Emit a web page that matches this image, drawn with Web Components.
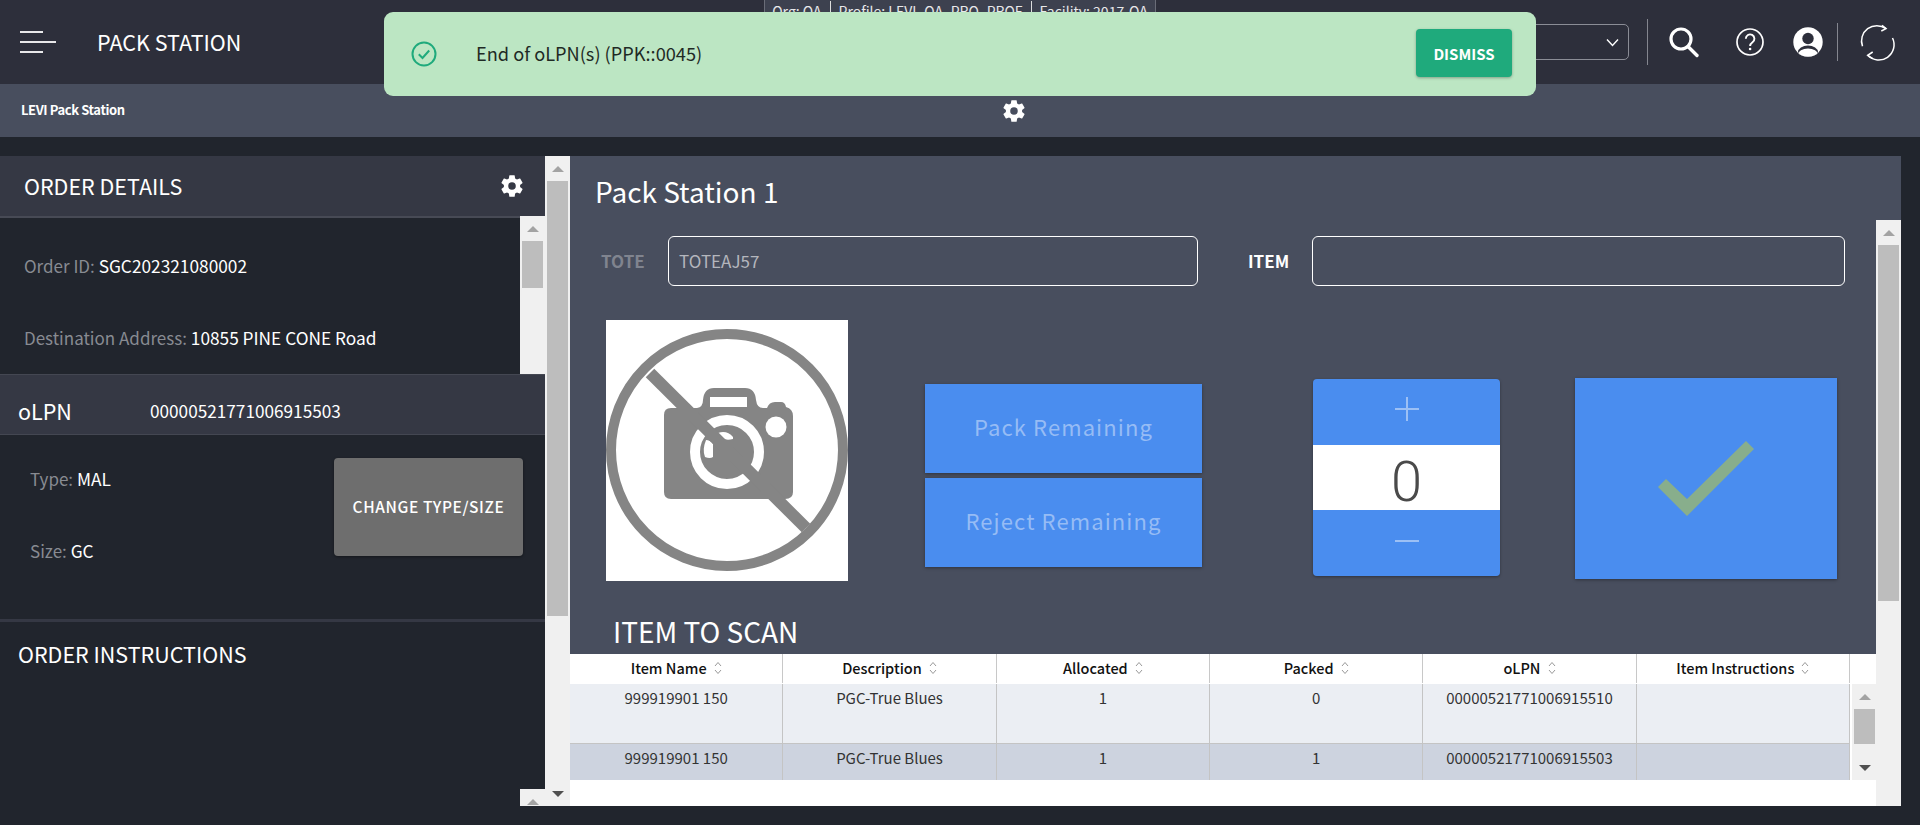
<!DOCTYPE html>
<html lang="en"><head><meta charset="utf-8"><title>Pack Station</title>
<style>
html,body{margin:0;padding:0;height:825px;overflow:hidden;background:#21252d;font-family:"Noto Sans CJK SC","Noto Sans",sans-serif}
</style></head><body>
<pack-app></pack-app>
<script>
const FONT='"Noto Sans CJK SC","Noto Sans",sans-serif';
function def(name,css,html,init){
  customElements.define(name,class extends HTMLElement{
    connectedCallback(){
      if(this.shadowRoot)return;
      const r=this.attachShadow({mode:'open'});
      r.innerHTML=`<style>:host{display:block;box-sizing:border-box;font-family:${FONT}}*{box-sizing:border-box}${css}</style>${typeof html==='function'?html(this):html}`;
      if(init)init(this,r);
    }
  });
}
const GEAR=`<svg viewBox="0 0 24 24" width="100%" height="100%"><path fill="#fff" d="M19.43 12.98c.04-.32.07-.64.07-.98s-.03-.66-.07-.98l2.11-1.65c.19-.15.24-.42.12-.64l-2-3.46c-.12-.22-.39-.3-.61-.22l-2.49 1c-.52-.4-1.08-.73-1.69-.98l-.38-2.65A.49.49 0 0 0 14 2h-4c-.25 0-.46.18-.49.42l-.38 2.65c-.61.25-1.17.59-1.69.98l-2.49-1c-.23-.09-.49 0-.61.22l-2 3.46c-.13.22-.07.49.12.64l2.11 1.65c-.04.32-.07.65-.07.98s.03.66.07.98l-2.11 1.65c-.19.15-.24.42-.12.64l2 3.46c.12.22.39.3.61.22l2.49-1c.52.4 1.08.73 1.69.98l.38 2.65c.03.24.24.42.49.42h4c.25 0 .46-.18.49-.42l.38-2.65c.61-.25 1.17-.59 1.69-.98l2.49 1c.23.09.49 0 .61-.22l2-3.46c.12-.22.07-.49-.12-.64l-2.11-1.65zM12 15.5A3.5 3.5 0 1 1 12 8.5a3.5 3.5 0 0 1 0 7z"/></svg>`;

def('gear-icon',`:host{display:block;width:26px;height:26px}`,GEAR);

def('fake-scrollbar',`
:host{display:flex;flex-direction:column;width:25px;background:#f0f0f0;overflow:hidden;flex:none;align-self:stretch}
.a{height:25px;flex:none;display:flex;align-items:center;justify-content:center}
.a i{display:block;width:0;height:0;border-left:6px solid transparent;border-right:6px solid transparent}
.u i{border-bottom:6px solid #a3a3a3}
.d i{border-top:6px solid #505050}
.t{background:#bdbdbd;margin:0 2px;flex:none}
.s{flex:1}`,
h=>`<div class="a u"><i></i></div><div class="t" style="height:${h.getAttribute('thumb')||0}px;margin-top:${h.getAttribute('offset')||0}px"></div><div class="s"></div>${h.hasAttribute('down')?'<div class="a d"><i></i></div>':''}`);

def('app-header',`
:host{display:flex;align-items:center;height:84px;background:#2d2f3b;color:#fff;position:relative}
.burger{width:36px;margin-left:20px;display:flex;flex-direction:column;gap:8px;flex:none}
.burger i{display:block;height:2px;background:#e8e8ea;width:23px}
.burger i:nth-child(2){width:36px}
h1{margin:0 0 0 41px;font-size:21.500px;font-weight:400;line-height:30px;white-space:nowrap}
.strip{position:absolute;left:764px;top:0;width:392px;height:28px;background:#3d414f;border:1px solid #6a6d78;border-top:0;display:flex;align-items:flex-start;justify-content:center;font-size:14px;line-height:20px;color:#e8e8ea;padding-top:1px;white-space:nowrap}
.strip span{padding:0 8px;height:20px}
.strip span+span{border-left:1px solid #ddd}
.sel{margin-left:auto;width:200px;height:36px;border:1px solid #8b8d96;border-radius:5px;display:flex;align-items:center;justify-content:flex-end;padding-right:9px;flex:none}
.div{width:1px;background:#84868f;flex:none}
.d1{height:46px;margin-left:18px}
.d2{height:38px;margin-left:7px}
.box{display:flex;align-items:center;justify-content:center;height:46px;flex:none}
`,`
<div class="burger"><i></i><i></i><i></i></div>
<h1>PACK STATION</h1>
<div class="strip"><span>Org: QA</span><span>Profile: LEVI_QA_PRO_PROF</span><span>Facility: 2017-QA</span></div>
<div class="sel"><svg width="13" height="9" viewBox="0 0 13 9"><path d="M1 1.500l5.500 6 5.500-6" fill="none" stroke="#fff" stroke-width="1.400"/></svg></div>
<div class="div d1"></div>
<div class="box" style="width:66px"><svg width="40" height="40" viewBox="0 0 40 40"><circle cx="20" cy="17" r="10" fill="none" stroke="#fff" stroke-width="3.200"/><path d="M27 24.500L36 33.500" stroke="#fff" stroke-width="3.400" stroke-linecap="round"/></svg></div>
<div class="box" style="width:72px"><svg width="30" height="30" viewBox="0 0 30 30"><circle cx="15" cy="15" r="13" fill="none" stroke="#fff" stroke-width="1.700"/><path d="M10.800 11.700a4.300 4.300 0 1 1 6.700 3.600c-1.600 1.100-2.400 1.900-2.400 3.800" fill="none" stroke="#fff" stroke-width="1.900"/><circle cx="15.100" cy="22" r="1.300" fill="#fff"/></svg></div>
<div class="box" style="width:44px"><svg width="30" height="30" viewBox="0 0 30 30"><defs><clipPath id="c"><circle cx="15" cy="15" r="14.700"/></clipPath></defs><circle cx="15" cy="15" r="14.700" fill="#fff"/><circle cx="15" cy="11.500" r="5.700" fill="#2d2f3b"/><g clip-path="url(#c)"><ellipse cx="15" cy="25" rx="10" ry="6.500" fill="#2d2f3b"/><ellipse cx="15" cy="27.500" rx="10" ry="6" fill="#fff"/></g></svg></div>
<div class="div d2"></div>
<div class="box" style="width:82px"><svg width="40" height="40" viewBox="1 0 40 40" fill="none" stroke="#fff" stroke-width="1.500"><path d="M4.500 24.300A15.300 15.300 0 0 1 28 6.700"/><path d="M24 3.400L28 6.700l-4.700 2.300"/><path d="M34.500 16A15.300 15.300 0 0 1 9.700 33.300"/><path d="M14.700 30L9.700 33.300l5 3.300"/></svg></div>
`);

def('sub-bar',`
:host{display:flex;align-items:center;height:53px;background:#484e5e;color:#fff;position:relative}
b{font-size:13px;font-weight:700;letter-spacing:-.4px;margin-left:21px;line-height:20px;width:103px;white-space:nowrap;flex:none;margin-bottom:2px}
gear-icon{margin-left:877px}`,`<b>LEVI Pack Station</b><gear-icon></gear-icon>`);

def('toast-msg',`
:host{position:absolute;left:384px;top:12px;width:1152px;height:84px;background:#bce6c3;border-radius:9px;display:flex;align-items:center;z-index:5;color:#1f2a25}
svg{margin-left:26px;flex:none}
span{margin-left:38px;font-size:18.200px;line-height:24px;flex:1;margin-bottom:2px}
button{all:unset;box-sizing:border-box;font-family:${FONT};width:96px;height:48px;margin:-2px 24px 0 0;background:#1faa7c;border-radius:4px;color:#fff;font-size:15px;font-weight:700;letter-spacing:0;display:flex;align-items:center;justify-content:center;box-shadow:0 1px 3px rgba(0,0,0,.3)}
`,`<svg width="28" height="28" viewBox="0 0 28 28"><circle cx="14" cy="14" r="11.500" fill="none" stroke="#1faa7c" stroke-width="2"/><path d="M8.800 14.300l3.700 3.700 6.700-7.500" fill="none" stroke="#1faa7c" stroke-width="2"/></svg><span>End of oLPN(s) (PPK::0045)</span><button>DISMISS</button>`);

def('order-panel',`
:host{display:flex;flex-direction:column;height:650px;background:#21252d;color:#fff;overflow:hidden}
.head{display:flex;align-items:center;height:60px;background:#353844;padding:0 20px 0 24px;justify-content:space-between;flex:none;border-bottom:0}
h2{margin:0;font-size:21.500px;font-weight:400;line-height:30px}
.det{display:flex;height:158px;flex:none;overflow:hidden}
.det>div{flex:1;padding:30px 0 0 24px;border-top:2px solid #474a55}
.ln{font-size:17.300px;line-height:36px;color:#fff;white-space:nowrap}
.ln span{color:#888b92;font-size:17px}
.ln+.ln{margin-top:36px}
.olpn{height:61px;flex:none;background:#353844;border-top:1px solid #444752;border-bottom:1px solid #444752;display:flex;align-items:center;padding:12px 0 0 18px}
.olpn b{font-size:21.500px;font-weight:400;width:132px;line-height:30px}
.olpn span{font-size:17.200px;line-height:24px}
.ty{height:184px;flex:none;display:flex;justify-content:space-between;padding:23px 22px 0 30px}
.ty .ln+.ln{margin-top:36px}
.ty>div{padding-top:3px}
.ty>.btn{width:189px;height:98px;background:#6e6e6e;border-radius:4px;display:flex;align-items:center;justify-content:center;font-size:15.500px;font-weight:500;letter-spacing:.6px;box-shadow:0 1px 3px rgba(0,0,0,.4);padding:0 0 3px}
.hr{height:3px;background:#353844;flex:none}
h3{margin:18px 0 0 18px;font-size:21.500px;font-weight:400;line-height:28px}
.stub{margin-top:auto;align-self:flex-end;height:17px}
`,`
<div class="head"><h2>ORDER DETAILS</h2><gear-icon></gear-icon></div>
<div class="det"><div><div class="ln"><span>Order ID:</span> SGC202321080002</div><div class="ln"><span>Destination Address:</span> 10855 PINE CONE Road</div></div><fake-scrollbar thumb="47"></fake-scrollbar></div>
<div class="olpn"><b>oLPN</b><span>00000521771006915503</span></div>
<div class="ty"><div><div class="ln"><span>Type:</span> MAL</div><div class="ln"><span>Size:</span> GC</div></div><div class="btn">CHANGE TYPE/SIZE</div></div>
<div class="hr"></div>
<h3>ORDER INSTRUCTIONS</h3>
<fake-scrollbar class="stub"></fake-scrollbar>`);

def('no-photo',`:host{width:242px;height:261px;background:#fff;flex:none}svg{display:block}`,`
<svg width="242" height="261" viewBox="606 320 242 261">
<circle cx="727" cy="450" r="116" fill="none" stroke="#858585" stroke-width="10"/>
<path fill="#858585" d="M671 408H697Q703 407 703 400Q704 388 714 388H745Q755 388 756 400Q757 408 763 408H767Q769 402 775 402H781Q785 402 786 407Q793 409 793 416V492Q793 499 785 499H671Q664 499 664 492V415Q664 408 671 408Z"/>
<rect x="710" y="397" width="37" height="10" fill="#fff"/>
<circle cx="776" cy="427" r="10.500" fill="#fff"/>
<circle cx="727" cy="452" r="32" fill="none" stroke="#fff" stroke-width="10"/>
<path d="M718 433Q727 430 733 437L733 439Q725 441 720 437Z" fill="#fff"/>
<path d="M706 440Q702 450 705 457Q710 459 713 457L713 444Q710 440 706 440Z" fill="#fff"/>
<path d="M650 373L806 528" stroke="#858585" stroke-width="12"/>
</svg>`);

def('blue-button',`:host{display:flex;align-items:center;justify-content:center;background:#4a8def;color:#96bcf5;font-size:22px;letter-spacing:1.100px;height:89px;padding-bottom:5px;box-shadow:0 1px 3px rgba(0,0,0,.35)}`,`<slot></slot>`);

def('qty-stepper',`
:host{display:flex;flex-direction:column;width:187px;height:197px;border-radius:4px;overflow:hidden;flex:none;margin-top:59px;margin-left:111px;box-shadow:0 1px 3px rgba(0,0,0,.35)}
.b{height:66px;background:#4a8def;display:flex;justify-content:center;align-items:center}
.v{height:65px;background:#fff;display:flex;align-items:center;justify-content:center;font-family:Roboto,sans-serif;font-weight:300;font-size:56px;line-height:65px;color:#4a4a4a;padding-top:9px}
`,`<div class="b"><svg width="24" height="24" viewBox="0 0 24 24" style="margin-top:-6px"><path d="M12 0V24M0 12H24" stroke="#9cc0f5" stroke-width="2"/></svg></div><div class="v">0</div><div class="b"><svg width="24" height="24" viewBox="0 0 24 24" style="margin-top:-4px"><path d="M0 12H24" stroke="#9cc0f5" stroke-width="2"/></svg></div>`);

def('data-table',`
:host{display:block;background:#fff;flex:1;color:#333}
.g{display:grid;grid-template-columns:repeat(6,213.330px)}
.h{height:30px;display:flex;background:#fff}
.h .g>div{height:29px;border-right:1px solid #c8c8c8;display:flex;align-items:center;justify-content:center;gap:7px;font-size:14.500px;font-weight:500;color:#111;line-height:20px;padding-bottom:1px}
.body{display:flex;height:96px}
.rows{width:1280px;flex:none}
.r>div{border-right:1px solid #c4c4c4;text-align:center;font-size:15px;line-height:28px;color:#333}
.r1{background:#ebeef3;height:60px;border-bottom:1px solid #c4c4c4}
.r2{background:#cdd3df;height:36px}
.r>div{height:100%}
fake-scrollbar{margin-left:2px}
`,`
<div class="h"><div class="g" id="hd"></div></div>
<div class="body"><div class="rows">
<div class="g r r1"><div>999919901 150</div><div>PGC-True Blues</div><div>1</div><div>0</div><div>00000521771006915510</div><div></div></div>
<div class="g r r2"><div>999919901 150</div><div>PGC-True Blues</div><div>1</div><div>1</div><div>00000521771006915503</div><div></div></div>
</div><fake-scrollbar thumb="35" down></fake-scrollbar></div>`,
(h,r)=>{
 const s=`<svg width="8" height="14" viewBox="0 0 8 14" fill="none" stroke="#999" stroke-width="1"><path d="M1 5l3-3.500 3 3.500M1 9l3 3.500 3-3.500"/></svg>`;
 r.getElementById('hd').innerHTML=['Item Name','Description','Allocated','Packed','oLPN','Item Instructions'].map(t=>`<div><span>${t}</span>${s}</div>`).join('');
});

def('station-panel',`
:host{display:flex;flex-direction:column;height:650px;width:1331px;background:#484e5e;color:#fff;overflow:hidden}
h2{margin:0;height:64px;padding:19px 0 0 25px;font-size:28px;font-weight:400;line-height:32px;flex:none}
.wrap{flex:1;display:flex;min-height:0}
.c{width:1306px;display:flex;flex-direction:column;flex:none}
.in{display:flex;align-items:center;height:50px;margin-top:16px;flex:none}
.in b{font-size:17px;font-weight:700;line-height:24px}
.f{height:50px;border:1px solid #fff;border-radius:6px;font-size:17px;display:flex;align-items:center;padding:0 0 2px 10px;color:#b4b6bd}
.ctl{display:flex;align-items:flex-start;height:261px;margin-top:34px;flex:none}
no-photo{margin-left:36px}
.st{width:277px;margin:64px 0 0 77px;display:flex;flex-direction:column;gap:5px;flex:none}
.ok{width:262px;height:201px;background:#4a8def;margin:58px 0 0 75px;flex:none;box-shadow:0 1px 3px rgba(0,0,0,.35)}
svg{display:block}
h3{margin:0;height:73px;padding:34px 0 0 43px;font-size:28px;font-weight:400;line-height:32px;flex:none}
`,`
<h2>Pack Station 1</h2>
<div class="wrap"><div class="c">
<div class="in"><b style="margin-left:31px;width:67px;color:#80848f">TOTE</b><div class="f" style="width:530px">TOTEAJ57</div><b style="margin-left:50px;width:64px">ITEM</b><div class="f" style="width:533px"></div></div>
<div class="ctl"><no-photo></no-photo>
<div class="st"><blue-button>Pack Remaining</blue-button><blue-button>Reject Remaining</blue-button></div>
<qty-stepper></qty-stepper>
<div class="ok"><svg width="262" height="201" viewBox="1575 378 262 201"><path fill="#88ae8c" d="M1658 487L1666 479L1687 499L1746 441L1754 449L1687 516Z"/></svg></div>
</div>
<h3>ITEM TO SCAN</h3>
<data-table></data-table>
</div><fake-scrollbar thumb="356"></fake-scrollbar></div>`);

def('pack-app',`
:host{display:block;width:1920px;height:825px;position:relative;overflow:hidden;background:#21252d}
.main{display:grid;grid-template-columns:545px 25px 1331px;margin-top:19px;height:650px}
`,`
<app-header></app-header><sub-bar></sub-bar><toast-msg></toast-msg>
<div class="main"><order-panel></order-panel><fake-scrollbar thumb="435" down></fake-scrollbar><station-panel></station-panel></div>`);
</script>
</body></html>
